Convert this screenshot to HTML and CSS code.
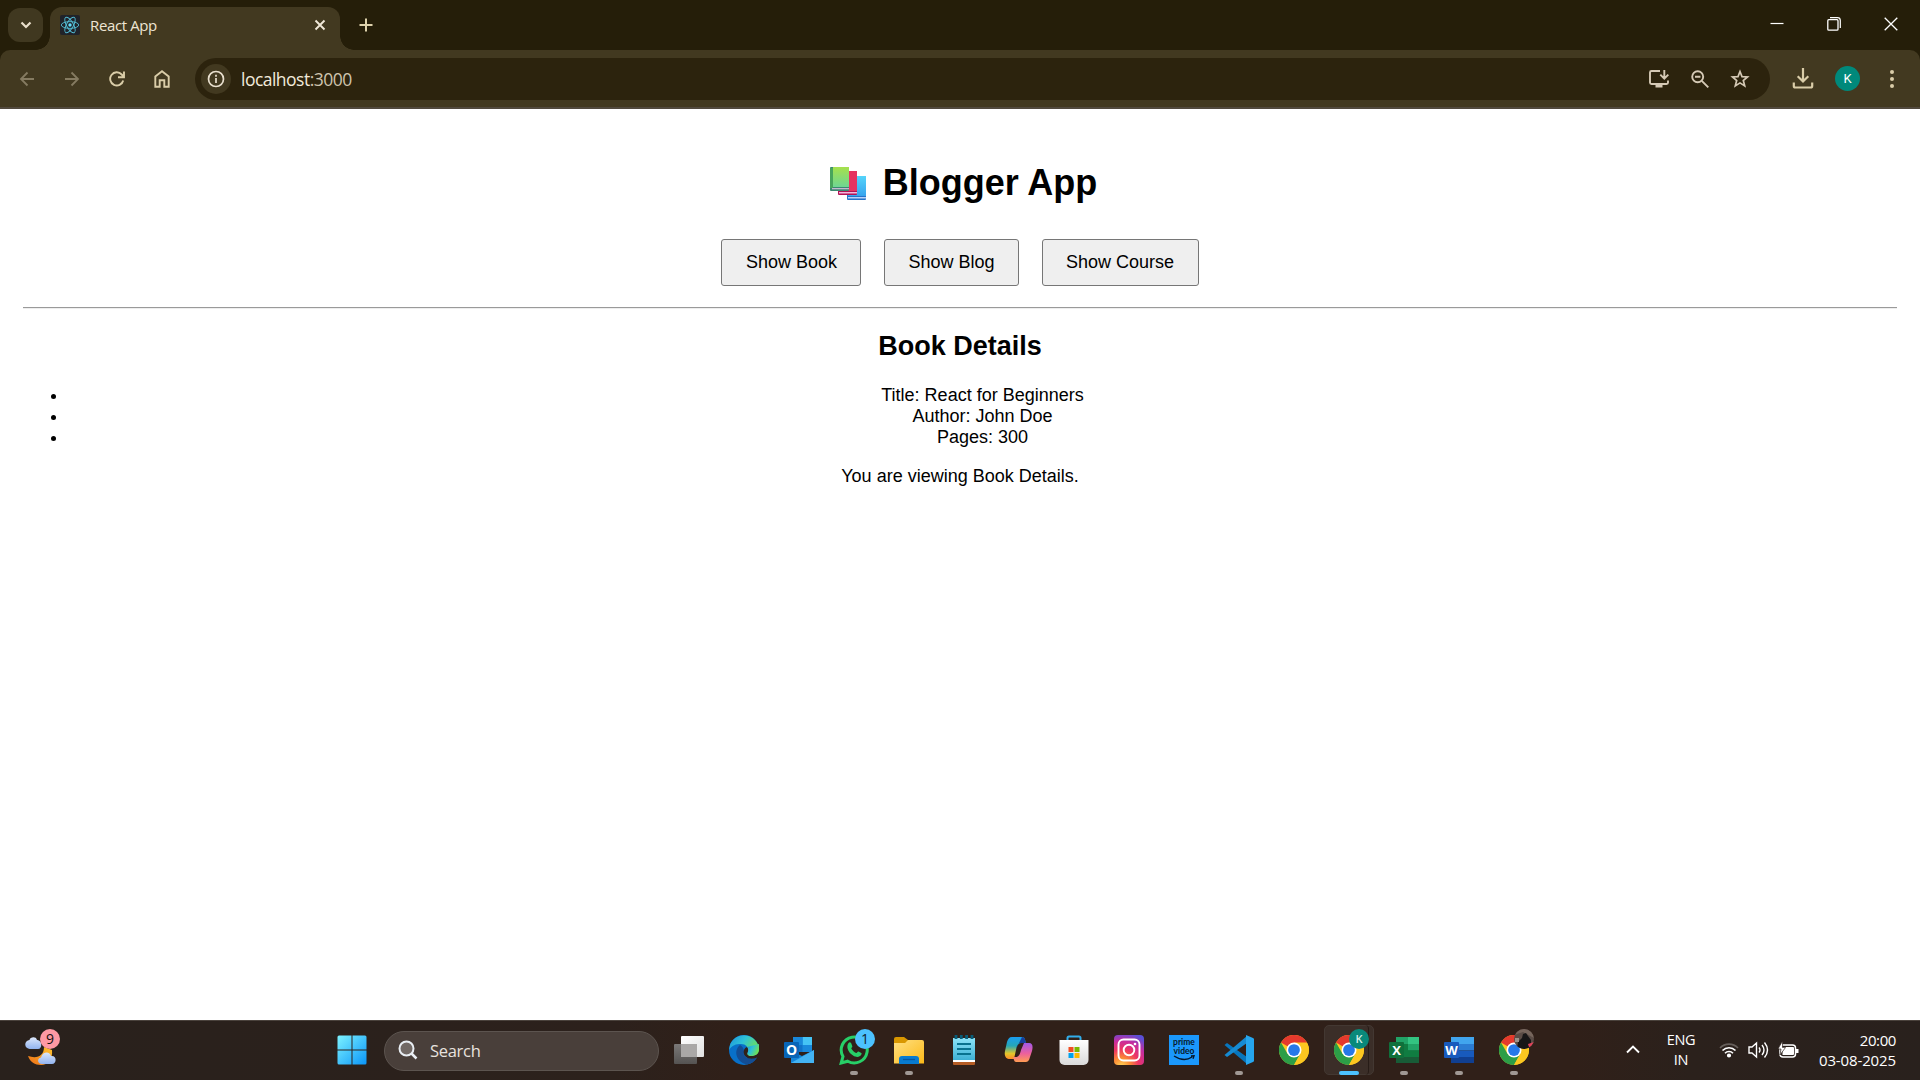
FILE: index.html
```html
<!DOCTYPE html>
<html lang="en">
<head>
<meta charset="utf-8">
<title>React App</title>
<link rel="stylesheet" href="styles.css">
</head>
<body>
<svg class="defs" width="0" height="0" aria-hidden="true">
  <defs>
    <linearGradient id="win" x1="0" y1="0" x2="1" y2="1"><stop offset="0" stop-color="#7df3ff"/><stop offset="1" stop-color="#0a95f8"/></linearGradient>
    <linearGradient id="cloud" x1="0" y1="0" x2="0" y2="1"><stop offset="0" stop-color="#dbe7fb"/><stop offset="1" stop-color="#91b3ef"/></linearGradient>
    <linearGradient id="moon" x1="1" y1="0" x2="0" y2="1"><stop offset="0" stop-color="#ffc52d"/><stop offset="1" stop-color="#ed6d16"/></linearGradient>
    <linearGradient id="green" x1="0" y1="0" x2="0" y2="1"><stop offset="0" stop-color="#a6e04c"/><stop offset="1" stop-color="#6ed693"/></linearGradient>
    <linearGradient id="blue" x1="0" y1="0" x2="0" y2="1"><stop offset="0" stop-color="#55d4fa"/><stop offset="1" stop-color="#37a4ee"/></linearGradient>
    <linearGradient id="edgeTop" x1="0" y1="0" x2="1" y2=".5"><stop offset="0" stop-color="#1c91dd"/><stop offset=".5" stop-color="#2fc3d6"/><stop offset="1" stop-color="#70e252"/></linearGradient>
    <linearGradient id="folder" x1="0" y1="0" x2="1" y2="1"><stop offset="0" stop-color="#ffe082"/><stop offset="1" stop-color="#fcb918"/></linearGradient>
    <linearGradient id="note" x1="0" y1="0" x2="0" y2="1"><stop offset="0" stop-color="#8be3f8"/><stop offset="1" stop-color="#3eb1d5"/></linearGradient>
    <linearGradient id="copA" x1="0" y1="0" x2="0" y2="1"><stop offset="0" stop-color="#1b9df0"/><stop offset=".4" stop-color="#25a7b7"/><stop offset=".75" stop-color="#e3c62a"/><stop offset="1" stop-color="#ff8a2a"/></linearGradient>
    <linearGradient id="copB" x1="0" y1="0" x2="0" y2="1"><stop offset="0" stop-color="#a158e8"/><stop offset=".55" stop-color="#ec609d"/><stop offset="1" stop-color="#ff9c52"/></linearGradient>
    <linearGradient id="bag" x1="0" y1="0" x2="0" y2="1"><stop offset="0" stop-color="#fff"/><stop offset="1" stop-color="#dadada"/></linearGradient>
    <radialGradient id="insta" cx=".25" cy="1.05" r="1.15"><stop offset="0" stop-color="#ffd95a"/><stop offset=".25" stop-color="#fb8b35"/><stop offset=".5" stop-color="#ee3563"/><stop offset=".75" stop-color="#c62da0"/><stop offset="1" stop-color="#5a4fd6"/></radialGradient>
    <linearGradient id="tvBack" x1="0" y1="0" x2="0" y2="1"><stop offset="0" stop-color="#7a7877"/><stop offset="1" stop-color="#555352"/></linearGradient>
    <linearGradient id="tvFront" x1="0" y1="0" x2="1" y2="1"><stop offset="0" stop-color="#fff"/><stop offset="1" stop-color="#e0e0e0"/></linearGradient>
    <symbol id="chrome" viewBox="0 0 48 48">
      <circle cx="24" cy="24" r="24" fill="#fcc720"/>
      <path d="M24 24 3.2 12A24 24 0 0 1 44.8 12H24z" fill="#e5392d"/>
      <path d="M3.2 12A24 24 0 0 0 24 48L34.4 30 24 24 13.6 30z" fill="#2c9e47"/>
      <path d="M24 13H45.3A24 24 0 0 1 24 48l9.8-17.5z" fill="#fcc720"/>
      <circle cx="24" cy="24" r="12" fill="#fff"/><circle cx="24" cy="24" r="9.4" fill="#2678e8"/>
    </symbol>
  </defs>
</svg>

<div class="screen">
  <header class="tabstrip">
    <button class="tab-search" aria-label="Search tabs"><svg width="12" height="8" viewBox="0 0 12 8"><path d="M1.5 1.5 6 6l4.5-4.5" fill="none" stroke="#e9dfcb" stroke-width="2.2"/></svg></button>
    <div class="tab">
      <svg class="favicon" width="20" height="20" viewBox="0 0 20 20"><rect width="20" height="20" rx="2" fill="#20232a"/><g fill="none" stroke="#53bdd5" stroke-width=".9"><ellipse cx="10" cy="10" rx="8.7" ry="3.4"/><ellipse cx="10" cy="10" rx="8.7" ry="3.4" transform="rotate(60 10 10)"/><ellipse cx="10" cy="10" rx="8.7" ry="3.4" transform="rotate(120 10 10)"/></g><circle cx="10" cy="10" r="1.7" fill="#61dafb"/></svg>
      <span class="tab-title">React App</span>
      <svg width="12" height="12" viewBox="0 0 12 12"><path d="m1.5 1.5 9 9m0-9-9 9" stroke="#f0e8d8" stroke-width="1.9"/></svg>
    </div>
    <svg class="new-tab" width="14" height="14" viewBox="0 0 14 14"><path d="M7 .5v13M.5 7h13" stroke="#ded2ac" stroke-width="2"/></svg>
    <div class="window-controls">
      <svg width="14" height="14" viewBox="0 0 14 14"><path d="M.5 6.5h13" stroke="#fff" stroke-width="1.2"/></svg>
      <svg width="14" height="14" viewBox="0 0 14 14"><path d="M3 .7h7.500a2.800 2.800 0 0 1 2.800 2.800V11" fill="none" stroke="#fff" stroke-width="1.2"/><rect x=".8" y="2.7" width="10.2" height="10.5" rx="1" fill="none" stroke="#fff" stroke-width="1.3"/></svg>
      <svg width="14" height="14" viewBox="0 0 14 14"><path d="m.7.7 12.6 12.6m0-12.6L.7 13.3" stroke="#fff" stroke-width="1.3"/></svg>
    </div>
  </header>

  <div class="toolbar-wrap">
    <nav class="toolbar">
      <div class="nav-icons">
        <svg width="16" height="16" viewBox="0 0 16 16" fill="none" stroke="#857b61" stroke-width="1.8"><path d="M15 8H2m6.5-6.5L2 8l6.5 6.5"/></svg>
        <svg width="16" height="16" viewBox="0 0 16 16" fill="none" stroke="#857b61" stroke-width="1.8"><path d="M1 8h13M7.5 1.5 14 8l-6.5 6.5"/></svg>
        <svg width="16" height="16" viewBox="0 0 16 16" fill="none" stroke="#dacda8" stroke-width="1.9"><path d="M14.2 9.500a6.600 6.600 0 1 1-1.500-6L14.500 5.500M15 .5v5.800H9"/></svg>
        <svg width="16" height="18" viewBox="0 0 16 18" fill="none" stroke="#dacda8" stroke-width="1.9"><path d="M1.3 6.5 8 1.3l6.7 5.2v10.3h-4.400v-6.500H5.700v6.500H1.300z"/></svg>
      </div>
      <div class="omnibox">
        <span class="site-info"><svg width="18" height="18" viewBox="0 0 18 18"><circle cx="9" cy="9" r="7.5" fill="none" stroke="#e9e0cf" stroke-width="1.7"/><path d="M9 8v5M9 4.8v1.9" stroke="#e9e0cf" stroke-width="1.7"/></svg></span>
        <span class="url">localhost<span class="port">:3000</span></span>
        <div class="omni-actions">
          <svg width="22" height="20" viewBox="0 0 22 20" fill="none" stroke="#d5c9b5" stroke-width="1.9"><path d="M12 2H3.500A1.500 1.500 0 0 0 2 3.500v10A1.500 1.500 0 0 0 3.500 15h15a1.500 1.500 0 0 0 1.500-1.500v-2M16.300 1v8.500M12.300 5.700l4 4 4-4"/><path d="M7.5 15h7v3.5h-7z" fill="#d5c9b5" stroke="none"/></svg>
          <svg width="18" height="18" viewBox="0 0 18 18" fill="none" stroke="#d5c9b5" stroke-width="1.9"><circle cx="6.7" cy="6.7" r="5.5"/><path d="m10.8 10.8 6.5 6.5M4 6.7h5.4"/></svg>
          <svg width="20" height="19" viewBox="0 0 20 19" fill="none" stroke="#d5c9b5" stroke-width="1.7"><path d="m10 2.5 2 5.1 5.500.4-4.200 3.500 1.400 5.400-4.700-3-4.700 3 1.400-5.400L2.500 8 8 7.600z"/></svg>
        </div>
      </div>
      <div class="browser-actions">
        <svg width="22" height="21" viewBox="0 0 22 21" fill="none" stroke="#dacda8" stroke-width="2.2"><path d="M11 0v13M5.7 8.2 11 13.5l5.3-5.3M1.8 14.5V18c0 .8.7 1.5 1.5 1.5h15.4c.8 0 1.5-.7 1.5-1.5v-3.5"/></svg>
        <span class="avatar">K</span>
        <svg class="menu" width="6" height="20" viewBox="0 0 6 20" fill="#dacda8"><circle cx="3" cy="3" r="2"/><circle cx="3" cy="10" r="2"/><circle cx="3" cy="17" r="2"/></svg>
      </div>
    </nav>
  </div>

  <main class="page">
    <h1><svg class="books" width="36" height="33" viewBox="0 0 36 33"><rect x="17" y="9" width="19" height="24" rx="1" fill="#2573c9"/><rect x="18" y="9" width="18" height="20" fill="url(#blue)"/><path d="M18 30h18v1.500H18z" fill="#b8d3fa"/><rect x="8" y="4" width="19" height="24" rx="1" fill="#b31355"/><path d="M9 4h18v20H9z" fill="#e63360"/><path d="M9 25h18v1.500H9z" fill="#f1b7dd"/><rect width="19" height="24" rx="1" fill="#3c8772"/><path d="M3 0h16v20H3z" fill="url(#green)"/><path d="M0 1h3v20H0z" fill="#48a45c"/><path d="M2 21h17v1.300H2z" fill="#c7b7d0"/></svg><span>Blogger App</span></h1>
    <div class="buttons"><button class="book">Show Book</button><button class="blog">Show Blog</button><button class="course">Show Course</button></div>
    <hr>
    <h2>Book Details</h2>
    <ul><li>Title: React for Beginners</li><li>Author: John Doe</li><li>Pages: 300</li></ul>
    <p>You are viewing Book Details.</p>
  </main>

  <footer class="taskbar">
    <div class="weather">
      <svg width="36" height="36" viewBox="0 0 36 36"><path d="M27 18c1 9-4 15-11 15-6 0-11-3-13-9 9 3 16 0 16-9z" fill="url(#moon)"/><path d="M5 17a4.500 4.500 0 0 1-.5-9C5 5 11 4 12 8c5-.5 6 9 1 9z" fill="url(#cloud)"/><path d="M17 32c-5 0-5-6-1-6.500 1-6 9-7 10-1.500 6-1 6 8 1 8z" fill="url(#cloud)"/></svg>
      <span class="badge weather-badge">9</span>
    </div>
    <svg class="start" width="30" height="30" viewBox="0 0 30 30"><path d="M2 .5h12.500v14H.5V2A1.500 1.500 0 0 1 2 .5zM15.500.5H28A1.500 1.500 0 0 1 29.500 2v12.500h-14zM.5 15.500h14v14H2A1.500 1.500 0 0 1 .5 28zM15.500 15.500h14V28a1.500 1.500 0 0 1-1.500 1.500H15.500z" fill="url(#win)"/></svg>
    <div class="search"><svg width="20" height="20" viewBox="0 0 20 20"><circle cx="8.5" cy="8.5" r="7" fill="#716965" stroke="#e9eef3" stroke-width="2"/><path d="m13.5 13.5 5 5" stroke="#e9eef3" stroke-width="2.5"/></svg><span>Search</span></div>
    <div class="apps">
      <div class="app"><svg width="30" height="30" viewBox="0 0 30 30"><rect y="9" width="23" height="20" rx="1" fill="url(#tvBack)"/><rect x="7" y="1" width="23" height="21" rx="1" fill="url(#tvFront)"/><path d="M7 9h16v13H7z" fill="#aaa8a7"/></svg></div>
      <div class="app"><svg width="30" height="30" viewBox="0 0 30 30"><circle cx="15" cy="15" r="15" fill="#0870c9"/><path d="M1 10A15 15 0 0 1 30 14c0 6-4 7-8 7-3 0-5-2-3-4 1-3-1-8-7-8-5 0-9 1-12 6z" fill="url(#edgeTop)"/><path d="M11 10c-8 7-2 18 7 19.500C23 28.500 26 26 28 22c-6 3-15 1-13-5 0-4-2-6-4-7z" fill="#134d94"/><path d="M30 14c0 6-4 7-8 7-3 0-5-2-3-4 1-1 0-4-1-5-4 1-4 7-2 9 4 4 9 3 13 1l2-2z" fill="#302019"/><path d="M18 12c3 1 0 5 1 7 3 3 10 2 11-4V9z" fill="url(#edgeTop)"/></svg></div>
      <div class="app"><svg width="30" height="30" viewBox="0 0 30 30"><path d="M9 2h19v15H9z" fill="#1071c8"/><path d="M18.500 2H28v8h-9.500z" fill="#45c3f5"/><path d="M9 2h9.500v8H9zM18.500 10H28v7h-9.500z" fill="#1988db"/><path d="M7 15.500 18 21l12-6v13H7z" fill="#1384d9"/><path d="M7 28 30 15v13z" fill="#43b3f3"/><rect y="7" width="15" height="16" rx="1" fill="#0865b7"/><text x="7.5" y="20" text-anchor="middle" font-size="14" font-weight="700" fill="#fff">O</text></svg></div>
      <div class="app"><svg width="30" height="30" viewBox="0 0 30 30"><path d="M2.200 28 4 21.500a13 13 0 1 1 4.700 4.700z" fill="#302019" stroke="#27cf67" stroke-width="3"/><path d="M9.500 8c1.500-1.500 2.500-.5 3 1l.8 2.200c.3.900-1.300 1.600-.9 2.500 1.200 2 2.600 3.300 4.700 4.200.9.300 1.500-1.700 2.400-1.300l2.800 1.500c1 .5-.6 4-4 3.900C13 21.800 5.500 14 9.500 8z" fill="#27cf67"/></svg><span class="badge blue">1</span><i class="dot"></i></div>
      <div class="app"><svg width="30" height="30" viewBox="0 0 30 30"><path d="M0 4a2 2 0 0 1 2-2h8l4 3v8H0z" fill="#d99700"/><path d="M0 8h11l3-3h14a2 2 0 0 1 2 2v21.500H0z" fill="url(#folder)"/><path d="M5 29v-5a3 3 0 0 1 3-3h14a3 3 0 0 1 3 3v5z" fill="#087bd0"/><path d="M9 24.500h12" stroke="#0756a0" stroke-width="1.3"/></svg><i class="dot"></i></div>
      <div class="app"><svg width="30" height="30" viewBox="0 0 30 30"><path d="M4 24h22v5a1 1 0 0 1-1 1H5a1 1 0 0 1-1-1z" fill="#b55c24"/><path d="M4 25h22v2H4z" fill="#fff"/><path d="M4 3h22v22H4z" fill="url(#note)"/><path d="M8 9h14M8 14h14M8 19h14" stroke="#08728f" stroke-width="1.8"/><path d="M7 0v4m5.300-4v4m5.300-4v4M23 0v4" stroke="#085d79" stroke-width="2.8"/></svg></div>
      <div class="app"><svg width="30" height="30" viewBox="0 0 30 30"><path d="M8 2h10c3 0 3 3 4 6h-5c-3 0-4 3-5 7l-2 9H6c-4 0-6-3-5-8l2-9c1-3 2-5 5-5z" fill="url(#copA)"/><path d="M18 2c3 0 3 3 4 6h-5c-3 0-4 3-5 6z" fill="#153e9c"/><path d="M20 8h5c4 0 4 4 3 8l-2 6c-1 4-2 5-5 5H12c-2 0-2-3-3-5h3c3 0 4-3 5-7z" fill="url(#copB)"/></svg></div>
      <div class="app"><svg width="30" height="30" viewBox="0 0 30 30"><path d="M8.500 7V3A1.500 1.500 0 0 1 10 1.500h10A1.500 1.500 0 0 1 21.500 3v4" fill="none" stroke="#32aeeb" stroke-width="2"/><path d="M.5 5h29v20a5 5 0 0 1-5 5h-19a5 5 0 0 1-5-5z" fill="url(#bag)"/><path d="M9.500 12h5v5h-5z" fill="#f04e23"/><path d="M15.500 12h5v5h-5z" fill="#7ab800"/><path d="M9.500 18h5v5h-5z" fill="#00a2ed"/><path d="M15.500 18h5v5h-5z" fill="#ffb900"/></svg></div>
      <div class="app"><svg width="30" height="30" viewBox="0 0 30 30"><rect width="30" height="30" rx="4" fill="url(#insta)"/><g fill="none" stroke="#fff" stroke-width="1.9"><rect x="4.500" y="4.500" width="21" height="21" rx="5"/><circle cx="15" cy="15" r="5.3"/></g><circle cx="21" cy="9" r="1.3" fill="#fff"/></svg></div>
      <div class="app"><svg width="30" height="30" viewBox="0 0 30 30"><path d="M0 0h30v30H0z" fill="#1b98fc"/><g class="prime-text" text-anchor="middle" fill="#07182a"><text x="15" y="9.5">prime</text><text x="15" y="18.5">video</text></g><path d="M5 21q10 6.500 18 1m-1-1 3-.3-1 3" fill="none" stroke="#07182a" stroke-width="1.4"/></svg></div>
      <div class="app"><svg width="30" height="30" viewBox="0 0 30 30"><path d="m.5 10 2.500-2L23 22v7z" fill="#0876bd"/><path d="m.5 20 2.500 2L23 8V1z" fill="#168bd3"/><path d="m22 0 7 3a1.500 1.500 0 0 1 1 1.500v21a1.500 1.500 0 0 1-1 1.500l-7 3z" fill="#26a6ee"/></svg><i class="dot"></i></div>
      <div class="app"><svg width="30" height="30"><use href="#chrome"/></svg></div>
      <div class="app active"><svg width="30" height="30"><use href="#chrome"/></svg><span class="badge teal">K</span><i class="dot wide"></i></div>
      <div class="app"><svg width="30" height="30" viewBox="0 0 30 30"><path d="M7 2h23v26H7z" fill="#185c37"/><path d="M7 2h12v7H7zM19 9h11v6.500H19z" fill="#21a366"/><path d="M19 2h11v7H19z" fill="#33c481"/><path d="M7 9h12v13H7zM19 15.500h11V22H19z" fill="#107c41"/><rect y="7" width="15" height="16" rx="1" fill="#0f703b"/><text x="7.5" y="20" text-anchor="middle" font-size="13" font-weight="700" fill="#fff">X</text></svg><i class="dot"></i></div>
      <div class="app"><svg width="30" height="30" viewBox="0 0 30 30"><path d="M7 2h23v7H7z" fill="#41a5ee"/><path d="M7 9h23v6.500H7z" fill="#2b7cd3"/><path d="M7 15.500h23V22H7z" fill="#185abd"/><path d="M7 22h23v6H7z" fill="#103f91"/><rect y="7" width="15" height="16" rx="1" fill="#185abd"/><text x="7.5" y="20" text-anchor="middle" font-size="13" font-weight="700" fill="#fff">W</text></svg><i class="dot"></i></div>
      <div class="app"><svg width="30" height="30"><use href="#chrome"/></svg><span class="badge photo"><svg width="20" height="20" viewBox="0 0 20 20"><path d="M0 0h20v20H0z" fill="#5a4c46"/><path d="M0 6 9 3l11 6V0H0z" fill="#76655c"/><path d="M3 20l1-7 4-4 1-4 3-1 2 3 3 4v9z" fill="#171617"/><path d="m14 15 6-2v5h-5z" fill="#df4359"/><path d="M1 9h4v4H1z" fill="#9c928a"/></svg></span><i class="dot"></i></div>
    </div>
    <div class="tray">
      <svg class="chevron" width="14" height="9" viewBox="0 0 14 9"><path d="m1 7.500 6-6 6 6" fill="none" stroke="#fff" stroke-width="1.9"/></svg>
      <div class="language"><span>ENG</span><span>IN</span></div>
      <div class="status">
        <svg width="20" height="16" viewBox="0 0 20 16" fill="none" stroke="#fff" stroke-width="1.6"><path d="M1 6a12.500 12.500 0 0 1 18 0" stroke="#665f5b"/><path d="M3.500 8.500a9 9 0 0 1 13 0M6 11.200a5.500 5.500 0 0 1 8 0"/><circle cx="10" cy="13.500" r="1.3" fill="#fff"/></svg>
        <svg width="21" height="18" viewBox="0 0 21 18" fill="none" stroke="#fff" stroke-width="1.4"><path d="M1 6h3l4.500-4v14L4 12H1zM11 6.500q2 2.500 0 5M14 4q4 5 0 10M16.500 1.500q6 7.500 0 15"/></svg>
        <svg width="21" height="18" viewBox="0 0 21 18"><rect x="2" y="4" width="15.500" height="12" rx="3" fill="none" stroke="#fff" stroke-width="1.5"/><path d="M4.500 6H15a1 1 0 0 1 1 1v6a1 1 0 0 1-1 1H4.500z" fill="#fff"/><path d="M18 8h2.500v4H18z" fill="#fff"/><path d="M4.500 0 0 8h3l-1 6 5.500-7.500H4.500z" fill="#fff" stroke="#2b211c" stroke-width=".7"/></svg>
      </div>
      <div class="clock"><span class="time">20:00</span><span class="date">03-08-2025</span></div>
    </div>
  </footer>
</div>
</body>
</html>
```
FILE: styles.css
```css
* { box-sizing: border-box; }
body { margin: 0; overflow: hidden; font-family: "Liberation Sans", Arial, sans-serif; }
svg { display: block; flex: none; }
.defs { position: absolute; }
.screen { width: 1920px; height: 1080px; display: grid; grid-template-rows: 50px 59px 1fr 60px; }

.tabstrip { background: #251e09; display: flex; padding-left: 8px; font-family: "Open Sans", sans-serif; }
.tab-search { width: 35px; height: 34px; margin: 8px 7px 0 0; padding: 0; border: 0; border-radius: 12px; background: #403820; display: grid; place-items: center; }
.tab { position: relative; width: 290px; height: 43px; margin-top: 7px; border-radius: 12px 12px 0 0; background: #423920; display: flex; align-items: center; padding: 0 14px 7px 10px; }
.tab::before, .tab::after { content: ""; position: absolute; bottom: 0; width: 14px; height: 14px; }
.tab::before { left: -14px; background: radial-gradient(circle at 0 0, transparent 13.5px, #423920 14px); }
.tab::after { right: -14px; background: radial-gradient(circle at 100% 0, transparent 13.5px, #423920 14px); }
.tab-title { flex: 1; padding-left: 10px; color: #eee5d3; font-size: 15px; letter-spacing: -.38px; line-height: 20px; }
.new-tab { margin: 18px 0 0 19px; }
.window-controls { margin: 17px 22px 0 auto; display: flex; gap: 43px; }

.toolbar-wrap { background: #251e09; }
.toolbar { height: 59px; background: #423920; border-bottom: 2px solid #51493d; border-radius: 10px 10px 0 0; display: flex; align-items: center; }
.nav-icons { width: 195px; padding-left: 19px; display: flex; align-items: center; gap: 29px; }
.omnibox { width: 1575px; height: 42px; border-radius: 21px; background: #2c230d; display: flex; align-items: center; padding: 0 20px 0 6px; }
.site-info { width: 30px; height: 30px; border-radius: 50%; background: #423920; display: grid; place-items: center; }
.url { margin: 1px 0 0 10px; color: #f2eadb; font: 17.5px "Open Sans", sans-serif; letter-spacing: -.52px; }
.port { color: #cfc3ae; }
.omni-actions { margin-left: auto; display: flex; align-items: center; gap: 21px; }
.browser-actions { flex: 1; padding: 0 25px 0 22px; display: flex; align-items: center; }
.avatar { width: 25px; height: 25px; margin-left: 21px; border-radius: 50%; background: #00897b; color: #fff; display: grid; place-items: center; font: 13px Roboto, sans-serif; }
.menu { margin-left: auto; }

.page { background: #fff; color: #000; padding: 49px 23px 0; text-align: center; font-size: 18px; line-height: 21px; }
h1 { height: 48px; margin: 0 0 33px; padding-left: 7px; display: flex; align-items: center; justify-content: center; gap: 17px; font-size: 36px; line-height: 48px; }
h1 span { padding-top: 2px; }
.books { margin-top: 3px; }
.buttons { display: flex; justify-content: center; gap: 23px; }
.buttons button { height: 47px; padding: 0; border: 1px solid #767676; border-radius: 3px; background: #efefef; color: #000; font: 18px "Liberation Sans", Arial, sans-serif; }
.buttons .book { width: 140px; padding-left: 1px; }
.buttons .blog { width: 135px; }
.buttons .course { width: 157px; padding-right: 1px; }
hr { margin: 21px 0 0; height: 2px; border: 0; border-top: 1px solid #9a9a9a; border-bottom: 1px solid #eee; }
h2 { margin: 22px 0 23px; font-size: 27px; line-height: 31px; }
ul { margin: 0; padding-left: 45px; }
.page p { margin: 18px 0 0; }

.taskbar { background: linear-gradient(90deg, #29211c, #2c211c 32%, #302019 38%, #302019 82%, #2b211c 88%, #29211d); border-top: 1px solid #4a423c; display: flex; align-items: center; font-family: "Open Sans", sans-serif; }
.weather { position: relative; width: 337px; padding: 0 0 2px 25px; }
.start { margin-bottom: 1px; }
.badge { position: absolute; width: 20px; height: 20px; border-radius: 50%; display: grid; place-items: center; font-size: 14px; line-height: 20px; overflow: hidden; }
.weather-badge { left: 40px; top: -3px; background: #ff99a4; color: #171011; }
.search { width: 275px; height: 40px; margin: 0 2px 0 17px; border: 1px solid #5c544f; border-radius: 20px; background: #493f3a; display: flex; align-items: center; gap: 12px; padding: 0 0 1px 13px; color: #e7e2df; font-size: 16.5px; letter-spacing: -.3px; }
.apps { display: flex; }
.app { position: relative; width: 55px; height: 50px; padding-bottom: 2px; display: grid; place-items: center; }
.app > svg { z-index: 1; }
.app text { font-family: "Open Sans", sans-serif; }
.app .prime-text text { font: 700 8.5px Lato, sans-serif; }
.app .badge { z-index: 2; right: 7px; top: 3px; }
.app .blue { background: #4cc2ff; color: #11222d; right: 6px; }
.app .teal { background: #09897b; color: #d9f0eb; font-size: 11px; font-weight: 600; }
.dot { position: absolute; bottom: 1px; left: 24px; width: 8px; height: 4px; border-radius: 2px; background: #a09894; z-index: 2; }
.wide { width: 20px; left: 18px; background: #4cc2ff; }
.active::before { content: ""; position: absolute; inset: -1px 2px 1px 3px; border: 1px solid #433832; border-radius: 5px; background: #3b2e28; }
.active::after { content: ""; position: absolute; inset: -1px 7px 1px 40px; border-right: 1px solid #271c17; border-radius: 5px; }
.tray { flex: 1; display: flex; align-items: center; padding: 0 0 2px 85px; color: #fff; font-size: 14.5px; line-height: 20px; }
.language { width: 42px; margin-left: 20px; display: flex; flex-direction: column; align-items: center; letter-spacing: -.3px; }
.status { margin-left: 17px; display: flex; align-items: center; gap: 9px; }
.clock { margin: 0 24px 0 auto; display: flex; flex-direction: column; align-items: flex-end; white-space: nowrap; font-size: 15px; letter-spacing: -.4px; }
.date { letter-spacing: -.12px; }
```
